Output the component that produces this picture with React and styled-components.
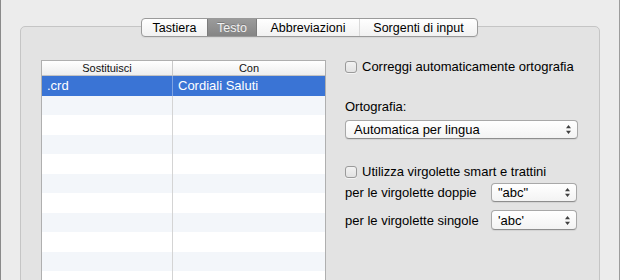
import React from "react";
import styled, { createGlobalStyle } from "styled-components";

const GlobalStyle = createGlobalStyle`
  html, body {
    margin: 0;
    padding: 0;
    background: #ececec;
  }
  body {
    font-family: "Liberation Sans", Arial, sans-serif;
    font-size: 13px;
    color: #000;
  }
`;

const Window = styled.div`
  width: 620px;
  height: 280px;
  box-sizing: border-box;
  border-left: 1px solid #8a8a8a;
  border-right: 1px solid #9c9c9c;
  background: #ececec;
  overflow: hidden;
  display: flex;
  flex-direction: column;
  padding-top: 18px;
`;

const TabStrip = styled.div`
  display: flex;
  flex-shrink: 0;
  align-self: flex-start;
  margin-left: 140px;
  position: relative;
  z-index: 1;
  height: 19px;
  box-sizing: border-box;
  border: 1px solid #9a9a9a;
  border-radius: 4px;
  background: linear-gradient(#ffffff, #f1f1f1);
  box-shadow: 0 1px 1px rgba(0, 0, 0, 0.06);
  overflow: hidden;
`;

const Tab = styled.div`
  width: ${(p) => p.$w}px;
  box-sizing: border-box;
  display: flex;
  align-items: center;
  justify-content: center;
  font-size: 12.5px;
  color: ${(p) => (p.$active ? "#f2f2f2" : "#000")};
  background: ${(p) =>
    p.$active ? "linear-gradient(#9b9b9b, #858585)" : "transparent"};
  box-shadow: ${(p) =>
    p.$active ? "inset 1px 0 0 #7c7c7c, inset -1px 0 0 #7c7c7c" : "none"};
  border-left: ${(p) => (p.$divider ? "1px solid #d9d9d9" : "none")};
  text-shadow: ${(p) => (p.$active ? "0 -1px 0 rgba(0,0,0,0.2)" : "none")};
`;

const Panel = styled.div`
  flex: none;
  height: 300px;
  margin: -11px 19px 0;
  border: 1px solid #c5c5c5;
  border-radius: 5px;
  background: #e3e3e3;
  display: flex;
  align-items: flex-start;
  gap: 19px;
  padding: 33px 0 0 20px;
`;

const Table = styled.div`
  width: 285px;
  height: 260px;
  flex-shrink: 0;
  box-sizing: border-box;
  border: 1px solid #afafaf;
  background: #fff;
  overflow: hidden;
`;

const HeaderRow = styled.div`
  display: grid;
  grid-template-columns: 131px 152px;
  height: 15px;
  box-sizing: border-box;
  border-bottom: 1px solid #c3c3c3;
  background: linear-gradient(#ffffff, #eeeeee);
`;

const HeaderCell = styled.div`
  box-sizing: border-box;
  font-size: 11px;
  line-height: 14px;
  text-align: center;
  color: #111;
  border-right: ${(p) => (p.$first ? "1px solid #c9c9c9" : "none")};
`;

const Row = styled.div`
  display: grid;
  grid-template-columns: 131px 152px;
  height: 19.5px;
  background: ${(p) =>
    p.$selected ? "#3a74d5" : p.$striped ? "#f3f6fa" : "#ffffff"};
  color: ${(p) => (p.$selected ? "#fff" : "#000")};
`;

const Cell = styled.div`
  box-sizing: border-box;
  padding-left: 5px;
  font-size: 13px;
  line-height: 19.5px;
  white-space: nowrap;
  border-right: ${(p) =>
    p.$first
      ? p.$selected
        ? "1px solid rgba(255,255,255,0.35)"
        : "1px solid #d4d4d4"
      : "none"};
`;

const Options = styled.div`
  width: 233px;
  display: flex;
  flex-direction: column;
`;

const CheckRow = styled.label`
  display: flex;
  align-items: center;
  gap: 5px;
  height: 13px;
  margin-top: ${(p) => p.$mt || 0}px;
  font-size: 13px;
  white-space: nowrap;
`;

const Box = styled.span`
  width: 12px;
  height: 12px;
  flex-shrink: 0;
  box-sizing: border-box;
  border: 1px solid #9a9a9a;
  border-radius: 3px;
  background: linear-gradient(#f2f2f2, #e2e2e2);
  box-shadow: 0 1px 0 rgba(255, 255, 255, 0.6);
`;

const Heading = styled.div`
  margin-top: ${(p) => p.$mt}px;
  line-height: 16px;
  font-size: 13px;
`;

const SelectRow = styled.div`
  display: flex;
  align-items: center;
  margin-top: ${(p) => p.$mt}px;
  height: ${(p) => p.$h}px;
`;

const SelectLabel = styled.div`
  width: 146px;
  flex-shrink: 0;
  font-size: 13px;
  white-space: nowrap;
`;

const Popup = styled.div`
  box-sizing: border-box;
  width: ${(p) => p.$w}px;
  height: ${(p) => p.$h || 19}px;
  margin-top: ${(p) => p.$mt || 0}px;
  display: flex;
  align-items: center;
  padding: 0 6px 0 ${(p) => p.$pl}px;
  border: 1px solid #a8a8a8;
  border-bottom-color: #8e8e8e;
  border-radius: 4px;
  background: linear-gradient(#ffffff, #f3f3f3);
  box-shadow: 0 1px 1px rgba(0, 0, 0, 0.07);
  font-size: 13px;
  white-space: nowrap;
`;

const Arrows = styled.svg`
  margin-left: auto;
  flex-shrink: 0;
`;

const Stepper = () => (
  <Arrows width="5" height="9" viewBox="0 0 5 9">
    <path d="M2.5 0 L5 3.3 H0 Z M0 5.7 H5 L2.5 9 Z" fill="#404040" />
  </Arrows>
);

const rows = Array.from({ length: 12 }, (_, i) => i);

const App = () => {
  return (
    <>
      <GlobalStyle />
      <Window>
        <TabStrip>
          <Tab $w={65}>Tastiera</Tab>
          <Tab $w={50} $active>
            Testo
          </Tab>
          <Tab $w={102}>Abbreviazioni</Tab>
          <Tab $w={118} $divider>
            Sorgenti di input
          </Tab>
        </TabStrip>
        <Panel>
          <Table>
            <HeaderRow>
              <HeaderCell $first>Sostituisci</HeaderCell>
              <HeaderCell>Con</HeaderCell>
            </HeaderRow>
            {rows.map((i) => (
              <Row key={i} $selected={i === 0} $striped={i % 2 === 1}>
                <Cell $first $selected={i === 0}>
                  {i === 0 ? ".crd" : ""}
                </Cell>
                <Cell>{i === 0 ? "Cordiali Saluti" : ""}</Cell>
              </Row>
            ))}
          </Table>
          <Options>
            <CheckRow>
              <Box />
              Correggi automaticamente ortografia
            </CheckRow>
            <Heading $mt={26}>Ortografia:</Heading>
            <Popup $w={233} $pl={8} $mt={5}>
              Automatica per lingua
              <Stepper />
            </Popup>
            <CheckRow $mt={26}>
              <Box />
              Utilizza virgolette smart e trattini
            </CheckRow>
            <SelectRow $mt={5} $h={19}>
              <SelectLabel>per le virgolette doppie</SelectLabel>
              <Popup $w={86} $pl={6}>
                "abc"
                <Stepper />
              </Popup>
            </SelectRow>
            <SelectRow $mt={8} $h={20}>
              <SelectLabel>per le virgolette singole</SelectLabel>
              <Popup $w={86} $h={20} $pl={6}>
                'abc'
                <Stepper />
              </Popup>
            </SelectRow>
          </Options>
        </Panel>
      </Window>
    </>
  );
};

export default App;
